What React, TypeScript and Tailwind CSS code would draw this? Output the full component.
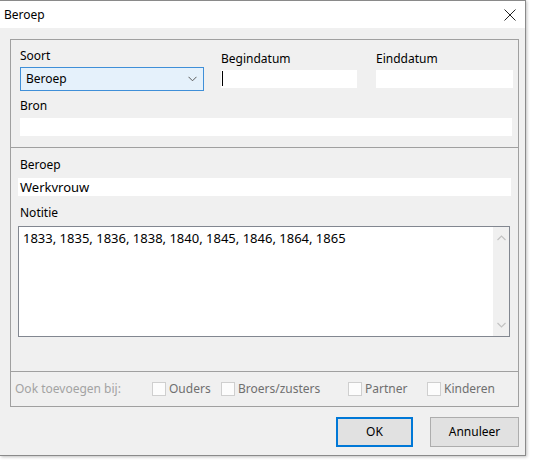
import React from "react";

const font = { fontFamily: '"Noto Sans", "Liberation Sans", sans-serif' };

function Label({ children, className = "" }: { children: React.ReactNode; className?: string }) {
  return <div className={`h-[16px] text-[12px] leading-[16px] text-black ${className}`}>{children}</div>;
}

function Field({ className = "", children }: { className?: string; children?: React.ReactNode }) {
  return <div className={`h-[18px] bg-white text-[12px] leading-[18px] text-black ${className}`}>{children}</div>;
}

function Check({ label, className = "" }: { label: string; className?: string }) {
  return (
    <div className={`flex shrink-0 items-center whitespace-nowrap ${className}`}>
      <span className="h-[14px] w-[14px] shrink-0 border border-[#cfcfcf] bg-[#fcfcfc]" />
      <span className="ml-[3px] text-[12px] leading-[16px] text-[#6f6f6f]">{label}</span>
    </div>
  );
}

export default function App() {
  return (
    <div className="h-[464px] w-[534px] overflow-hidden bg-white" style={font}>
      <div className="flex h-[456px] w-[526px] flex-col border-t border-r border-b border-[#8a8a8a] bg-[#f0f0f0] shadow-[1px_1px_3px_rgba(0,0,0,0.25)]">
        {/* title bar */}
        <div className="flex h-[27px] shrink-0 items-center justify-between bg-white pl-[4px] pr-[9px]">
          <span className="text-[12px] leading-[16px] text-black">Beroep</span>
          <svg width="12" height="12" viewBox="0 0 12 12" className="mt-[1px]">
            <path d="M0.5 0.5 L11.5 11.5 M11.5 0.5 L0.5 11.5" stroke="#222" strokeWidth="1" fill="none" />
          </svg>
        </div>

        {/* body */}
        <div className="pl-[10px] pt-[11px]">
          <div className="w-[509px] border border-[#a0a0a0]">
            {/* section 1 */}
            <div className="pb-[11px] pl-[9px] pt-[8px]">
              <div className="flex">
                <div className="w-[184px]">
                  <Label>Soort</Label>
                  <div className="mt-[3px] flex h-[24px] items-center justify-between border border-[#3f8fd8] bg-[#e5f1fb] pl-[5px] pr-[6px]">
                    <span className="text-[12px] leading-[16px] text-black">Beroep</span>
                    <svg width="9" height="6" viewBox="0 0 9 6">
                      <path d="M0.5 0.8 L4.5 4.8 L8.5 0.8" stroke="#5a5a5a" strokeWidth="1" fill="none" />
                    </svg>
                  </div>
                </div>
                <div className="ml-[17px] w-[136px] pt-[3px]">
                  <Label>Begindatum</Label>
                  <Field className="relative mt-[3px]">
                    <span className="absolute left-[1px] top-[1px] h-[15px] w-[1px] bg-black" />
                  </Field>
                </div>
                <div className="ml-[19px] w-[137px] pt-[3px]">
                  <Label>Einddatum</Label>
                  <Field className="mt-[3px]" />
                </div>
              </div>
              <Label className="mt-[7px]">Bron</Label>
              <Field className="mt-[4px] w-[492px]" />
            </div>

            {/* section 2 */}
            <div className="border-t border-[#a0a0a0] pb-[34px] pl-[7px] pt-[9px]">
              <Label className="ml-[2px]">Beroep</Label>
              <Field className="mt-[5px] w-[493px] pl-[2px] text-[13px]">Werkvrouw</Field>
              <Label className="ml-[2px] mt-[9px]">Notitie</Label>
              <div className="mt-[5px] flex h-[111px] w-[492px] border border-[#828790] bg-white">
                <div className="flex-1 pl-[4px] pt-[3px] text-[13px] leading-[16px] text-black">
                  1833, 1835, 1836, 1838, 1840, 1845, 1846, 1864, 1865
                </div>
                <div className="flex w-[16px] flex-col items-center justify-between bg-[#f0f0f0] py-[8px]">
                  <svg width="9" height="6" viewBox="0 0 9 6">
                    <path d="M0.5 5 L4.5 1 L8.5 5" stroke="#c2c2c2" strokeWidth="1.2" fill="none" />
                  </svg>
                  <svg width="9" height="6" viewBox="0 0 9 6">
                    <path d="M0.5 1 L4.5 5 L8.5 1" stroke="#c2c2c2" strokeWidth="1.2" fill="none" />
                  </svg>
                </div>
              </div>
            </div>

            {/* section 3 */}
            <div className="flex h-[35px] items-center border-t border-[#a0a0a0] pl-[4px]">
              <span className="w-[137px] shrink-0 whitespace-nowrap text-[12px] leading-[16px] text-[#a3a3a3]">
                Ook toevoegen bij:
              </span>
              <Check label="Ouders" className="w-[69px]" />
              <Check label="Broers/zusters" className="w-[127px]" />
              <Check label="Partner" className="w-[79px]" />
              <Check label="Kinderen" />
            </div>
          </div>

          {/* buttons */}
          <div className="mt-[10px] flex w-[509px] justify-end gap-[17px]">
            <button className="h-[30px] w-[77px] border-2 border-[#0078d7] bg-[#e1e1e1] text-[12px] text-black">OK</button>
            <button className="h-[30px] w-[89px] border border-[#adadad] bg-[#e1e1e1] text-[12px] text-black">Annuleer</button>
          </div>
        </div>
      </div>
    </div>
  );
}
